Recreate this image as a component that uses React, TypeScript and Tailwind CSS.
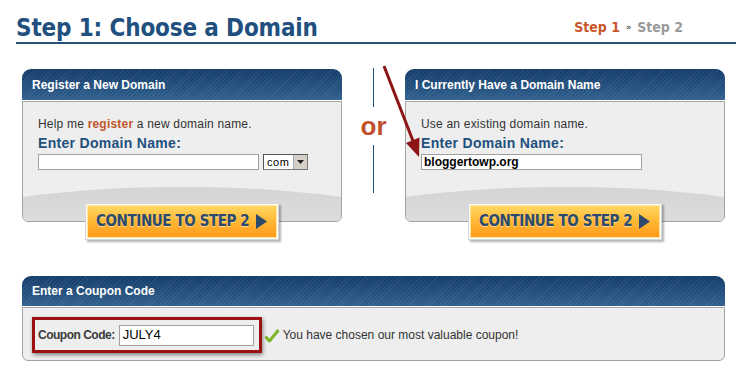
import React from "react";

const headerBg =
  "bg-[image:repeating-linear-gradient(135deg,rgba(255,255,255,0.07)_0px,rgba(255,255,255,0.07)_1px,transparent_1px,transparent_3px),linear-gradient(to_bottom,#133c69,#2f5f8e)]";

function PanelHeader({ title, h }: { title: string; h: string }) {
  return (
    <div
      className={
        headerBg +
        " " +
        h +
        " rounded-t-[9px] flex items-center pl-[10px] text-white font-bold text-[12px] font-['Liberation_Sans',Arial,sans-serif]"
      }
    >
      {title}
    </div>
  );
}

function Dome() {
  return (
    <div className="mt-auto h-[34px] overflow-hidden">
      <div className="w-[160%] -ml-[30%] h-[90px] rounded-[50%] bg-gradient-to-b from-[#d4d4d4] via-[#e0e0e0] to-[#e8e8e8]" />
    </div>
  );
}

function ContinueButton() {
  return (
    <div className="relative z-10 -mt-[19px] w-[194px] h-[37px] p-[1px] bg-white border border-[#d6d6d6] shadow-[2px_2px_2px_rgba(0,0,0,0.3)]">
      <div className="w-full h-full flex items-center justify-between pl-[8px] pr-[9px] border border-[#ffe49a] bg-gradient-to-b from-[#ffd75f] via-[#ffb733] to-[#ff9a1d]">
        <span className="text-[15px] tracking-[-0.4px] font-bold text-[#2b4a6c] font-['DejaVu_Sans_Condensed','DejaVu_Sans',sans-serif] [text-shadow:0_1px_0_rgba(255,255,255,0.5)]">
          CONTINUE TO STEP 2
        </span>
        <svg width="11" height="15" viewBox="0 0 11 15">
          <polygon points="0,0 11,7.5 0,15" fill="#2b4a6c" />
        </svg>
      </div>
    </div>
  );
}

function DomainPanel({
  title,
  intro,
  value,
  select,
}: {
  title: string;
  intro: React.ReactNode;
  value: string;
  select?: boolean;
}) {
  return (
    <div className="w-[320px] flex flex-col items-center">
      <div className="w-full flex flex-col">
        <PanelHeader title={title} h="h-[31px]" />
        <div className="mt-px h-[121px] flex flex-col rounded-b-[6px] border border-[#a3a3a3] bg-[#eeeeee] overflow-hidden font-['Liberation_Sans',Arial,sans-serif]">
          <div className="pl-[15px] pt-[14px]">
            <div className="text-[12px] leading-[16px] text-[#333333] tracking-[0.2px]">{intro}</div>
            <div className="mt-[3px] text-[14px] leading-[17px] font-bold text-[#21507e] tracking-[0.3px]">
              Enter Domain Name:
            </div>
            <div className="mt-[2px] flex items-center gap-[4px]">
              <div className="w-[221px] h-[16px] bg-white border border-[#a0a0a0] flex items-center pl-[2px] text-[12px] font-bold text-black">
                {value}
              </div>
              {select && (
                <div className="w-[45px] h-[16px] flex bg-white border border-[#7a7a7a] border-t-[#555] border-l-[#555]">
                  <div className="flex-1 flex items-center pl-[3px] text-[11px] leading-none text-black tracking-[0.6px]">
                    com
                  </div>
                  <div className="w-[14px] h-full bg-[#d4d0c8] border-l border-[#aaa] flex items-center justify-center">
                    <svg width="7" height="4" viewBox="0 0 7 4">
                      <polygon points="0,0 7,0 3.5,4" fill="#222" />
                    </svg>
                  </div>
                </div>
              )}
            </div>
          </div>
          <Dome />
        </div>
      </div>
      <ContinueButton />
    </div>
  );
}

export default function App() {
  return (
    <div className="relative w-[744px] h-[374px] bg-white overflow-hidden">
      {/* Title bar */}
      <div className="ml-[16px] w-[720px] h-[44px] flex justify-between border-b-2 border-[#245079]">
        <div className="pt-[16px] text-[24px] leading-[24px] tracking-[-0.15px] font-bold text-[#21507e] font-['DejaVu_Sans_Condensed','DejaVu_Sans',sans-serif]">
          Step 1: Choose a Domain
        </div>
        <div className="pt-[20px] pr-[53px] flex items-start text-[14px] leading-[14px] font-bold font-['DejaVu_Sans_Condensed','DejaVu_Sans',sans-serif]">
          <span className="text-[#c8562b]">Step 1</span>
          <span className="mx-[6px] text-[9px] leading-[14px] text-[#555]">»</span>
          <span className="text-[#9a9a9a]">Step 2</span>
        </div>
      </div>

      {/* Domain panels */}
      <div className="mt-[25px] pl-[22px] flex">
        <DomainPanel
          title="Register a New Domain"
          intro={
            <>
              Help me <span className="font-bold text-[#c0562b]">register</span> a new domain name.
            </>
          }
          value=""
          select
        />
        <div className="w-[63px] flex flex-col items-center -mt-px">
          <div className="w-px h-[39px] bg-[#21507e]" />
          <div className="h-[38px] text-[26px] leading-[38px] font-bold text-[#c0512c] font-['Liberation_Sans',Arial,sans-serif]">
            or
          </div>
          <div className="w-px h-[48px] bg-[#21507e]" />
        </div>
        <DomainPanel
          title="I Currently Have a Domain Name"
          intro="Use an existing domain name."
          value="bloggertowp.org"
        />
      </div>

      {/* Coupon panel */}
      <div className="mt-[36px] ml-[22px] w-[703px] flex flex-col font-['Liberation_Sans',Arial,sans-serif]">
        <PanelHeader title="Enter a Coupon Code" h="h-[30px]" />
        <div className="mt-px h-[54px] rounded-b-[6px] border border-[#a3a3a3] bg-[#eeeeee] pl-[9px] pt-[9px] flex items-start">
          <div className="h-[36px] border-[3px] border-[#9b1111] shadow-[1px_2px_4px_rgba(0,0,0,0.45)] flex items-center pl-[3px] pr-[5px] gap-[4px]">
            <span className="text-[12px] tracking-[-0.5px] font-bold text-[#3a3a3a]">Coupon Code:</span>
            <div className="w-[135px] h-[21px] bg-white border border-[#a0a0a0] flex items-center pl-[3px] text-[13px] text-black">
              JULY4
            </div>
          </div>
          <div className="h-[36px] ml-[2px] flex items-center gap-[3px]">
            <svg width="16" height="15" viewBox="0 0 16 15">
              <path d="M1.5 8.5 L5.5 13 L14.5 2" fill="none" stroke="#7db52a" strokeWidth="3" strokeLinejoin="round" />
            </svg>
            <span className="text-[12px] text-[#333333]">You have chosen our most valuable coupon!</span>
          </div>
        </div>
      </div>

      {/* Red arrow */}
      <svg className="absolute left-0 top-0 pointer-events-none" width="744" height="374">
        <line x1="384" y1="66" x2="413" y2="141" stroke="#8c1414" strokeWidth="3" />
        <polygon points="419,157 406,143 419.5,137.5" fill="#8c1414" />
      </svg>
    </div>
  );
}
